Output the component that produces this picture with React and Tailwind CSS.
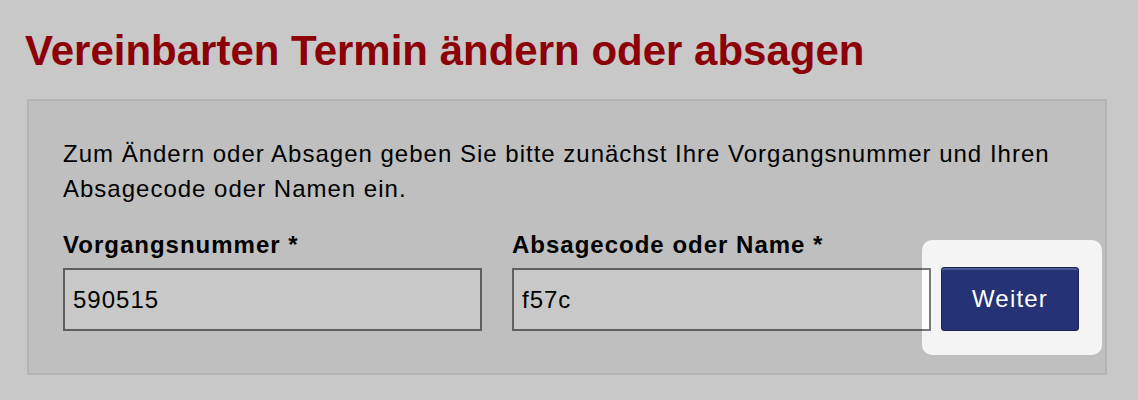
import React from "react";

const Field = ({ label, value }) => (
  <div className="flex flex-col w-[419px]">
    <label className="text-[24px] font-bold leading-[26px] tracking-[1px] text-black mb-[10px]">
      {label}
    </label>
    <input
      type="text"
      defaultValue={value}
      className="h-[63px] w-full border-2 border-[#7a7a7a] bg-white px-[8px] text-[24px] tracking-[1px] text-black outline-none"
    />
  </div>
);

const App = () => {
  return (
    <div
      className="relative min-h-[400px] bg-white overflow-hidden"
      style={{ fontFamily: '"Liberation Sans", Arial, Helvetica, sans-serif' }}
    >
      <div className="pl-[25px] pr-[31px] pt-[27px]">
        <h1 className="text-[42px] font-bold leading-[48px] text-[#b3000a] mb-[24px]">
          Vereinbarten Termin ändern oder absagen
        </h1>

        <div className="ml-[2px] border-2 border-[#e6e6e6] bg-[#f4f4f4] pl-[34px] pr-[24px] pt-[35px] pb-[42px]">
          <p className="text-[24px] leading-[35px] tracking-[1px] text-black mb-[26px]">
            Zum Ändern oder Absagen geben Sie bitte zunächst Ihre Vorgangsnummer und Ihren
            <br />
            Absagecode oder Namen ein.
          </p>

          <div className="flex items-end">
            <Field label="Vorgangsnummer *" value="590515" />
            <div className="ml-[30px]">
              <Field label="Absagecode oder Name *" value="f57c" />
            </div>
            <div className="relative ml-[10px]">
              <button className="h-[64px] w-[138px] rounded-[3px] border border-[#1b2358] bg-[#253276] text-[24px] tracking-[1.2px] text-white shadow-[inset_0_2px_0_#4a5894]">
                Weiter
              </button>
              {/* spotlight overlay */}
              <div className="pointer-events-none absolute top-[-27px] left-[-19px] right-[-23px] bottom-[-24px] z-10 rounded-[10px] shadow-[0_0_0_2000px_rgba(0,0,0,0.216)]" />
            </div>
          </div>
        </div>
      </div>
    </div>
  );
};

export default App;
